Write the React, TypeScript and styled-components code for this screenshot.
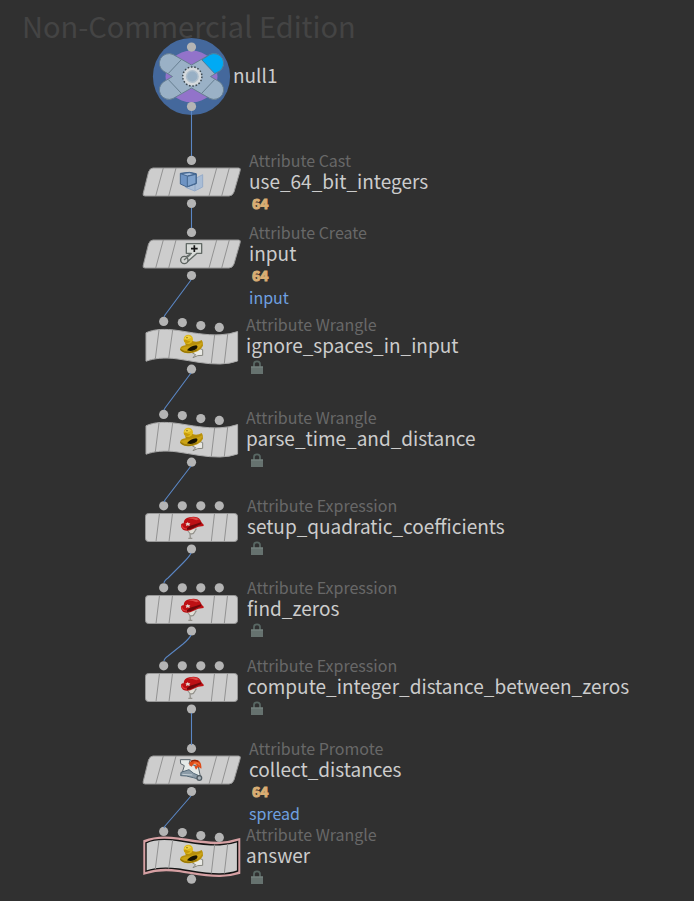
import React from "react";
import styled, { createGlobalStyle } from "styled-components";

type Shape = "slant" | "wave" | "rect";
type IconName = "cast" | "create" | "wrangle" | "expression" | "promote";

interface OperatorNode {
  name: string;
  kind: string;
  shape: Shape;
  icon: IconName;
  y: number;
  badge: "64" | "lock";
  output?: string;
  displayed?: boolean;
}

const NODES: OperatorNode[] = [
  { name: "use_64_bit_integers", kind: "Attribute Cast", shape: "slant", icon: "cast", y: 182, badge: "64" },
  { name: "input", kind: "Attribute Create", shape: "slant", icon: "create", y: 254, badge: "64", output: "input" },
  { name: "ignore_spaces_in_input", kind: "Attribute Wrangle", shape: "wave", icon: "wrangle", y: 346, badge: "lock" },
  { name: "parse_time_and_distance", kind: "Attribute Wrangle", shape: "wave", icon: "wrangle", y: 439, badge: "lock" },
  { name: "setup_quadratic_coefficients", kind: "Attribute Expression", shape: "rect", icon: "expression", y: 527, badge: "lock" },
  { name: "find_zeros", kind: "Attribute Expression", shape: "rect", icon: "expression", y: 609, badge: "lock" },
  { name: "compute_integer_distance_between_zeros", kind: "Attribute Expression", shape: "rect", icon: "expression", y: 687, badge: "lock" },
  { name: "collect_distances", kind: "Attribute Promote", shape: "slant", icon: "promote", y: 770, badge: "64", output: "spread" },
  { name: "answer", kind: "Attribute Wrangle", shape: "wave", icon: "wrangle", y: 856, badge: "lock", displayed: true },
];

const LABEL_GAP: Record<Shape, number> = { slant: 9, wave: 6, rect: 7 };

const GlobalStyle = createGlobalStyle`
  body {
    margin: 0;
    background: #303030;
    font-family: "Noto Sans CJK SC", "Noto Sans", sans-serif;
  }
`;

const Network = styled.main`
  position: relative;
  min-height: 100vh;
  overflow: hidden;
  background: #303030;
`;

const Watermark = styled.h1`
  margin: 0;
  padding: 4px 22px;
  color: #444444;
  font-size: 29px;
  font-weight: 400;
  line-height: 42px;
  white-space: nowrap;
`;

const Wires = styled.svg`
  position: absolute;
  top: 0;
  left: 0;
  overflow: visible;
  fill: none;
  stroke: #5a86c4;
  stroke-width: 1.1;
`;

const Placed = styled.article<{ $x: number; $y: number; $gap: number }>`
  position: absolute;
  left: ${(p) => p.$x}px;
  top: ${(p) => p.$y}px;
  display: flex;
  gap: ${(p) => p.$gap}px;
  white-space: nowrap;
`;

const Tile = styled.svg`
  flex: none;
  overflow: visible;
`;

const Labels = styled.div`
  display: flex;
  flex-direction: column;
`;

const Kind = styled.span`
  color: #686868;
  font-size: 16px;
  line-height: 20px;
`;

const Name = styled.h2`
  margin: 0;
  color: #cccccc;
  font-size: 19px;
  font-weight: 400;
  line-height: 22px;
`;

const RootName = styled(Name)`
  line-height: 74px;
`;

const Badge = styled.span<{ $inset: number }>`
  display: flex;
  align-items: center;
  height: 22px;
  padding-left: ${(p) => p.$inset}px;
  color: #d9ae74;
  font-size: 14px;
  font-weight: 700;
  line-height: 22px;
  -webkit-text-stroke: 1px #d9ae74;
`;

const Output = styled.span`
  color: #6fa0e0;
  font-size: 16px;
  line-height: 22px;
`;

const Dot = ({ x, y }: { x: number; y: number }) => <circle cx={x} cy={y} r="4.6" fill="#b4b4b4" />;

const WAVE = "M6 18.8C14 15 25 14.6 38 16.5S66 21.5 80 20.8Q90 20.3 97.6 17.6V47Q90 49.8 80 50C66 50.3 52 47 38 45S14 44.4 6 47.2Z";
const WAVE_EDGE = "M4.4 17C14 13.2 25 12.6 38 14.5S66 19.5 80 18.8Q90 18.3 99.2 15.4V49Q90 51.8 80 52C66 52.3 52 49 38 47S14 46.4 4.4 49.4Z";

const BODY: Record<Shape, string> = {
  slant: "M13 18H98.5Q101 18 100.2 20.5L94 42Q92.5 46 89 46H5Q2.4 46 3.2 43.5L8.5 22Q10 18 13 18Z",
  rect: "M8.5 18.5H94.5Q97.5 18.5 97.5 21.5V43.5Q97.5 46.5 94.5 46.5H8.5Q5.5 46.5 5.5 43.5V21.5Q5.5 18.5 8.5 18.5Z",
  wave: WAVE,
};

const STRIPES: Record<Shape, string> = {
  slant: "M23.3 18L15.7 46M36 18L28.7 46M76.7 18L69 46M89.3 18L81.7 46",
  rect: "M19.5 18.5L16 46.5M32.5 18.5L29 46.5M74.5 18.5L71.3 46.5M87.5 18.5L84.3 46.5",
  wave: "M19 16L15.3 45M32.7 16L28.7 44.5M74.7 20.5L71.3 49.5M87.7 20L84.3 49.5",
};

const PORTS: Record<Shape, [number, number][]> = {
  slant: [[51.5, 10.4], [51.5, 53.5]],
  rect: [[23.7, 10.8], [42.3, 10.8], [60.8, 10.8], [79.3, 10.8], [51.5, 54]],
  wave: [[23.7, 7.4], [42.3, 8.6], [60.8, 11.6], [79.3, 13.4], [51.5, 55.2]],
};

const CastIcon = () => (
  <g transform="translate(-10 -5) scale(.3333)" strokeLinejoin="round" strokeWidth="3">
    <path d="M167 96L195 101L218 89V126L194 138L167 127Z" fill="#a9bdd6" stroke="#95abc9" />
    <path d="M195 102V137" stroke="#8fa7c6" fill="none" />
    <path d="M151 85L178 82L199 86V116L171 126L151 117Z" fill="#6d93c3" stroke="#43658f" />
    <path d="M152 86L178 83L198 87L172 93Z" fill="#a7c0de" stroke="#43658f" />
    <path d="M172 94L198 88V115L172 125Z" fill="#7fa2cc" stroke="#43658f" />
  </g>
);

const CreateIcon = () => (
  <g transform="translate(-10 3) scale(.3333)" strokeLinejoin="round">
    <path d="M169 56H215V85H201L172 110L161 101L184 85H169Z" fill="#d9dcd9" stroke="#626a66" strokeWidth="4" />
    <path d="M183 71H203M193 61V81" stroke="#151515" strokeWidth="5" fill="none" />
    <circle cx="163" cy="105" r="11" fill="#d0d2d0" stroke="#5c625f" strokeWidth="4" />
    <path d="M162 105L181 89" stroke="#6b726e" strokeWidth="4" fill="none" />
  </g>
);

const WrangleIcon = () => (
  <g transform="translate(-10 -4) scale(.3333)">
    <path d="M200 112L218 119V136L203 137L189 143L197 134L187 129Z" fill="#e9e9e4" stroke="#85857c" strokeWidth="3" />
    <path d="M165 96L189 92L193 108L168 110Z" fill="#b38c07" />
    <circle cx="175" cy="88" r="14" fill="#dfb91c" />
    <path d="M163 86Q166 77 177 77L184 83L171 89Z" fill="#efd145" />
    <path d="M161 91Q167 87 174 92L181 94Q177 101 168 99Q162 97 161 91Z" fill="#c89b09" />
    <path d="M150 118Q151 108 166 106Q181 104 189 94Q205 97 215 90Q220 95 219 107Q213 119 202 124Q186 132 168 129Q153 127 150 118Z" fill="#b8900a" />
    <path d="M153 115Q165 109 178 109Q193 103 204 103L217 97Q216 109 202 117L187 124Q164 127 153 115Z" fill="#cba315" />
    <path d="M171 121Q181 108 199 106Q206 110 199 117Q187 126 171 121Z" fill="#171302" />
    <path d="M151 119Q162 129 180 127L201 120" fill="none" stroke="#8c6e06" strokeWidth="3" />
    <circle cx="171" cy="83" r="2" fill="#6f5906" />
  </g>
);

const ExpressionIcon = () => (
  <g transform="translate(-10 -5) scale(.3333)">
    <path d="M171 118L180 130L181 145M199 116L190 130L179 133M175 145H187" fill="none" stroke="#96948d" strokeWidth="4" />
    <path d="M174 120L181 129H188L196 118Z" fill="#e1dfd6" />
    <path d="M161 100Q161 85 178 82Q203 77 211 90L216 99Q223 103 221 108Q204 108 191 116Q173 127 159 119Q151 112 153 104Q155 98 161 100Z" fill="#bd1014" />
    <path d="M174 86Q193 77 207 88L199 91Q185 84 174 86Z" fill="#dc4a48" />
    <path d="M180 107Q199 103 213 97L214 102Q201 106 190 114Q175 123 162 117Q174 114 180 107Z" fill="#6e080b" />
    <path d="M155 106Q158 116 171 117" fill="none" stroke="#df3c3c" strokeWidth="4" />
    <path d="M173 96L176 100L181 100L178 104L179 108L173 106L168 108L169 103L166 100L171 100Z" fill="#e2d6ce" />
  </g>
);

const PromoteIcon = () => (
  <g transform="translate(-10 -3) scale(.3333)" strokeLinejoin="round">
    <path d="M151 74H181L177 86L205 95L211 123L190 119L178 109L157 112L163 92L152 86Z" fill="#e4e9e8" stroke="#59646b" strokeWidth="3" />
    <path d="M153 112L177 104L191 115L211 124L207 133L190 128L169 123L152 122Z" fill="#8b9ba7" stroke="#566a78" strokeWidth="3" />
    <circle cx="208" cy="129" r="7" fill="#a9b3ba" stroke="#525d64" strokeWidth="4" />
    <path d="M157 118L187 120" stroke="#c2cdd3" strokeWidth="3" />
    <path d="M179 82Q190 70 204 76Q216 82 214 101L205 95L198 104L193 94L201 92Q198 85 190 88L185 95L178 91Z" fill="#dd4b19" />
    <path d="M183 79Q194 73 205 80" fill="none" stroke="#8b260d" strokeWidth="4" />
    <path d="M191 85L202 84L209 90" fill="none" stroke="#ff8b4b" strokeWidth="3" />
  </g>
);

const ICONS: Record<IconName, () => React.JSX.Element> = {
  cast: CastIcon,
  create: CreateIcon,
  wrangle: WrangleIcon,
  expression: ExpressionIcon,
  promote: PromoteIcon,
};

const LockIcon = () => (
  <svg width="14" height="14" viewBox="0 0 14 14" role="img" aria-label="Locked">
    <path d="M4 7V4Q4 1.3 7 1.3T10 4V7" fill="none" stroke="#586763" strokeWidth="1.8" />
    <path d="M1 6.5H13V14H1Z" fill="#66726f" />
    <path d="M1 7H13" stroke="#7b8885" strokeWidth="1" />
  </svg>
);

const NodeTile = ({ node }: { node: OperatorNode }) => {
  const Icon = ICONS[node.icon];
  return (
    <Tile width="100" height="64" viewBox="0 0 100 64" aria-hidden="true">
      {node.displayed && <path d={WAVE_EDGE} fill="#d6a0a3" stroke="#d6a0a3" strokeWidth="2.2" />}
      <path
        d={BODY[node.shape]}
        fill="#cdcdcd"
        stroke={node.displayed ? "#141414" : node.shape === "wave" ? "#aaaaaa" : "#989898"}
        strokeWidth={node.displayed ? 1.4 : 1}
      />
      <path d={STRIPES[node.shape]} fill="none" stroke="#929292" strokeWidth="1" />
      <Icon />
      {PORTS[node.shape].map(([x, y]) => (
        <Dot key={`${x}-${y}`} x={x} y={y} />
      ))}
    </Tile>
  );
};

const NullTile = () => (
  <Tile width="78" height="78" viewBox="-38.5 -38.5 78 78" aria-hidden="true">
    <circle r="38.6" fill="#44689c" />
    <circle r="26" fill="#9273ca" />
    <path
      d="M0-11.5L18.5-22A9.6 9.6 0 0 1 27.7-5.2L19 0L27.7 5.2A9.6 9.6 0 0 1 18.5 22L0 11.5L-18.5 22A9.6 9.6 0 0 1-27.7 5.2L-19 0L-27.7-5.2A9.6 9.6 0 0 1-18.5-22Z"
      fill="#9ab1c6"
      stroke="#677f91"
    />
    <path d="M10.4-16.6L18.5-22A9.6 9.6 0 0 1 27.7-5.2L23.2-3Z" fill="#00aaf4" stroke="#487e9e" />
    <path d="M-10.4-16.6L-23.2-3M-10.4 16.6L-23.2 3M10.4 16.6L23.2 3" stroke="#677f91" />
    <circle cx=".8" r="9.5" fill="#d5dadd" />
    <circle cx=".8" r="9.6" fill="none" stroke="#3e4a52" strokeWidth="1.5" strokeDasharray="1.6 1.75" />
    <circle cx=".8" r="6.5" fill="#aebfcd" />
    <circle cx=".8" r="5" fill="#98b0c5" />
    <Dot x={0} y={-29.4} />
    <Dot x={0} y={30} />
  </Tile>
);

export default function App() {
  return (
    <Network>
      <GlobalStyle />
      <Watermark>Non-Commercial Edition</Watermark>
      <Placed $x={153} $y={38} $gap={2}>
        <NullTile />
        <RootName>null1</RootName>
      </Placed>
      {NODES.map((node) => (
        <Placed key={node.name} $x={140} $y={node.y - 32} $gap={LABEL_GAP[node.shape]}>
          <NodeTile node={node} />
          <Labels>
            <Kind>{node.kind}</Kind>
            <Name>{node.name}</Name>
            <Badge $inset={node.shape === "wave" ? 4 : 3}>{node.badge === "64" ? "64" : <LockIcon />}</Badge>
            {node.output && <Output>{node.output}</Output>}
          </Labels>
        </Placed>
      ))}
      <Wires width="1" height="1" aria-hidden="true">
        <path d="M191.5 111V156M191.5 208V228M191.5 713V745" />
        <path d="M191 280L165 315L164 317" />
        <path d="M191 373L165 408L164 410" />
        <path d="M191 466L165 500L164 502" />
        <path d="M191 553Q190 556 183 563L168 578Q164 581 164 583" />
        <path d="M191 635Q190 638 183 644L168 656Q164 659 164 661" />
        <path d="M191 796L165 826L164 828" />
      </Wires>
    </Network>
  );
}
